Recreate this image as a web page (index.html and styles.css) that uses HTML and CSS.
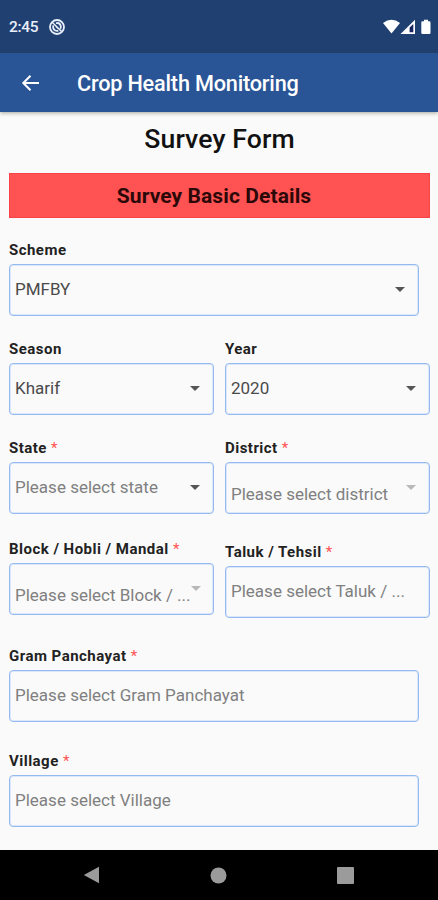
FILE: index.html
```html
<!DOCTYPE html>
<html lang="en">
<head>
<meta charset="utf-8">
<title>Crop Health Monitoring</title>
<link rel="stylesheet" href="styles.css">
</head>
<body>
<div class="screen">
  <header class="status">
    <span class="time">2:45</span>
    <svg class="sync" width="16" height="16" viewBox="0 0 16 16" fill="none" stroke="#e9effa">
      <circle cx="8" cy="8" r="7" stroke-width="1.8"/>
      <circle cx="8" cy="8" r="3.9" stroke-width="1.8" stroke-dasharray="9 3.25" transform="rotate(70 8 8)"/>
      <path d="M3.2 3.2l9.6 9.6M6.8 7.2l2.6 2.4" stroke-width="1.5"/>
    </svg>
    <svg class="signals" width="48" height="16" viewBox="0 0 48 16" fill="#fff">
      <path d="M0 4Q8.500-2.500 17 4L8.500 14.500Z"/>
      <path d="M17.500 15L32 .8V15Z"/>
      <path fill="#17245f" d="M26.600 8.600V13.200H30.300V5Z"/>
      <path d="M39.500 2.200H41V.8H45V2.200H46.300Q47.500 2.200 47.500 3.400V13.800Q47.500 15 46.300 15H39.500Q38.300 15 38.300 13.800V3.400Q38.300 2.200 39.500 2.200Z"/>
    </svg>
  </header>
  <nav class="appbar">
    <svg class="back" width="20" height="18" viewBox="0 0 20 18" fill="none" stroke="#fff" stroke-width="2">
      <path d="M18 9H2.500M9.500 1.800L2.300 9L9.500 16.200"/>
    </svg>
    <span class="title">Crop Health Monitoring</span>
  </nav>
  <main class="content">
    <h1 class="heading">Survey Form</h1>
    <h2 class="banner"><span>Survey Basic Details</span></h2>
    <form class="form">
      <div class="field wide">
        <label class="label">Scheme</label>
        <div class="box"><span class="value">PMFBY</span><i class="caret"></i></div>
      </div>
      <div class="row">
        <div class="field">
          <label class="label">Season</label>
          <div class="box"><span class="value">Kharif</span><i class="caret"></i></div>
        </div>
        <div class="field">
          <label class="label">Year</label>
          <div class="box"><span class="value">2020</span><i class="caret"></i></div>
        </div>
      </div>
      <div class="row">
        <div class="field">
          <label class="label">State <b class="req">*</b></label>
          <div class="box"><span class="hint">Please select state</span><i class="caret"></i></div>
        </div>
        <div class="field">
          <label class="label">District <b class="req">*</b></label>
          <div class="box disabled"><span class="hint">Please select district</span><i class="caret"></i></div>
        </div>
      </div>
      <div class="row locality">
        <div class="field">
          <label class="label">Block / Hobli / Mandal <b class="req">*</b></label>
          <div class="box disabled"><span class="hint">Please select Block / ...</span><i class="caret"></i></div>
        </div>
        <div class="field taluk">
          <label class="label">Taluk / Tehsil <b class="req">*</b></label>
          <div class="box"><span class="hint">Please select Taluk / ...</span></div>
        </div>
      </div>
      <div class="field wide panchayat">
        <label class="label">Gram Panchayat <b class="req">*</b></label>
        <div class="box"><span class="hint">Please select Gram Panchayat</span></div>
      </div>
      <div class="field wide village">
        <label class="label">Village <b class="req">*</b></label>
        <div class="box"><span class="hint">Please select Village</span></div>
      </div>
    </form>
  </main>
  <footer class="navbar">
    <svg width="17" height="18" viewBox="0 0 17 18"><path d="M16 .8V17.200L.8 9Z"/></svg>
    <svg width="17" height="17" viewBox="0 0 17 17"><circle cx="8.500" cy="8.500" r="8"/></svg>
    <svg width="17" height="17" viewBox="0 0 17 17"><rect width="17" height="17" rx="1"/></svg>
  </footer>
</div>
</body>
</html>
```
FILE: styles.css
```css
* { box-sizing: border-box; }
body {
  margin: 0;
  font-family: Roboto, sans-serif;
  background: #fafafa;
}
.screen {
  display: flex;
  flex-direction: column;
  width: 438px;
  height: 900px;
  overflow: hidden;
}
svg { display: block; flex: none; }
.status {
  display: flex;
  align-items: center;
  height: 53px;
  padding: 1px 7px 0 9px;
  background: #204071;
  color: #e9effa;
}
.time { width: 40px; font-size: 15.500px; font-weight: 500; letter-spacing: -.3px; }
.signals { margin-left: auto; }
.appbar {
  display: flex;
  align-items: center;
  height: 59px;
  padding: 1px 0 0 21px;
  background: #295597;
  color: #fff;
  box-shadow: 0 1px 4px rgba(60, 60, 40, .45);
  z-index: 1;
}
.title {
  margin-left: 36px;
  font-size: 21.700px;
  font-weight: 500;
  letter-spacing: -.2px;
  white-space: nowrap;
}
.content { flex: 1; padding: 11px 8px 0 9px; background: #fafafa; }
.heading {
  margin: 0;
  font-size: 26.600px;
  line-height: 32px;
  font-weight: 500;
  text-align: center;
  letter-spacing: .1px;
  color: #111;
}
.banner {
  display: flex;
  align-items: center;
  justify-content: center;
  height: 45px;
  margin: 18px 0 22px;
  padding: 1px 11px 0 0;
  background: #ff5252;
  border: 1px solid #fa4347;
  font-size: 21px;
  font-weight: 700;
  letter-spacing: .1px;
  color: #2c0909;
}
.form { display: flex; flex-direction: column; gap: 23px; }
.row { display: grid; grid-template-columns: 205px 205px; gap: 11px; }
.field { display: flex; flex-direction: column; gap: 4px; }
.wide { width: 410px; }
.label {
  font-size: 15px;
  line-height: 20px;
  font-weight: 700;
  letter-spacing: .47px;
  color: #222;
  white-space: nowrap;
}
.req { font-weight: 400; color: #ff5252; }
.box {
  display: flex;
  align-items: center;
  justify-content: space-between;
  height: 52px;
  padding: 0 13px 2px 5px;
  border: 1px solid #94baf0;
  border-radius: 4px;
  box-shadow: inset 0 0 0 1px #dbe8fb;
}
.value, .hint { font-size: 17px; line-height: 22px; white-space: nowrap; }
.value { color: #4a4a4a; }
.hint { color: #808080; }
.caret {
  flex: none;
  border: 5.500px solid transparent;
  border-top-color: #555;
  border-bottom: 0;
}
.disabled .hint { margin-top: 14px; }
.disabled .caret { border-top-color: #b8b8b8; }
.locality { margin-top: 2px; }
.taluk { margin-top: 3px; }
.panchayat { margin-top: 5px; }
.village { margin-top: 6px; }
.navbar {
  display: flex;
  align-items: center;
  justify-content: space-between;
  height: 50px;
  padding: 0 84px 0 83px;
  background: #000;
  fill: #9b9b9b;
}
```
